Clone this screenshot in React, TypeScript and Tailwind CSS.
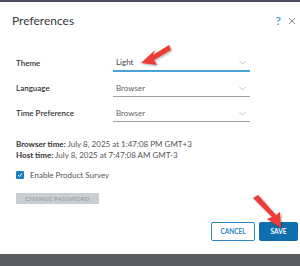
import React from "react";

function Chevron() {
  return (
    <svg width="7" height="5" viewBox="0 0 7 5" className="shrink-0">
      <path d="M0.5 1 L3.5 4 L6.5 1" fill="none" stroke="#b0b4b8" strokeWidth="0.8" />
    </svg>
  );
}

function SelectRow({ label, value, active }: { label: string; value: string; active?: boolean }) {
  return (
    <div className="flex items-end h-[25px]">
      <div className="w-[97px] text-[8px] font-semibold text-[#333] pb-[3px]">{label}</div>
      <div
        className={
          "w-[137px] flex items-center justify-between pl-[3px] pr-[4px] pb-[2px] " +
          (active ? "border-b-[2px] border-[#49a3d9]" : "border-b border-[#9ca3a8]")
        }
      >
        <span className={"text-[8px] " + (active ? "text-[#444]" : "text-[#666]")}>{value}</span>
        <Chevron />
      </div>
    </div>
  );
}

export default function App() {
  return (
    <div
      className="w-[300px] h-[266px] bg-white flex flex-col relative overflow-hidden"
      style={{ fontFamily: "Lato, 'Open Sans', sans-serif" }}
    >
      <div className="h-[2px] bg-[#4b4f60]" />
      <div className="flex-1 flex flex-col px-[16px]">
        <div className="flex items-center justify-between h-[37px] -ml-[4px] -mr-[12px]">
          <div className="text-[12px] text-[#3a3a3a]">Preferences</div>
          <div className="flex items-center gap-[7px]">
            <span className="text-[12px] text-[#3f9ad6] font-semibold">?</span>
            <svg width="8" height="8" viewBox="0 0 8 8">
              <path d="M1 1 L7 7 M7 1 L1 7" stroke="#888" strokeWidth="1" />
            </svg>
          </div>
        </div>
        <div className="mt-[8px] flex flex-col">
          <SelectRow label="Theme" value="Light" active />
          <SelectRow label="Language" value="Browser" />
          <SelectRow label="Time Preference" value="Browser" />
        </div>
        <div className="mt-[17px] text-[8px] text-[#555] leading-[11px]">
          <div>
            <span className="font-bold text-[#333]">Browser time:</span> July 8, 2025 at 1:47:08 PM GMT+3
          </div>
          <div>
            <span className="font-bold text-[#333]">Host time:</span> July 8, 2025 at 7:47:08 AM GMT-3
          </div>
        </div>
        <div className="mt-[8px] flex items-center gap-[6px]">
          <div className="w-[8px] h-[8px] bg-[#1b7fc4] rounded-[1px] flex items-center justify-center">
            <svg width="6" height="6" viewBox="0 0 6 6">
              <path d="M1 3 L2.5 4.5 L5 1.5" fill="none" stroke="white" strokeWidth="1" />
            </svg>
          </div>
          <span className="text-[8px] text-[#555]">Enable Product Survey</span>
        </div>
        <div className="mt-[12px] w-[83px] h-[11px] bg-[#c9ced2] rounded-[1px] flex items-center justify-center">
          <span className="text-[6px] text-[#9aa1a6] font-semibold tracking-[0.3px]">CHANGE PASSWORD</span>
        </div>
        <div className="mt-auto mb-[13px] flex justify-end gap-[4px] -mr-[14px]">
          <div className="w-[44px] h-[19px] border border-[#2d87c4] rounded-[2px] flex items-center justify-center">
            <span className="text-[6.5px] font-bold text-[#2d87c4]">CANCEL</span>
          </div>
          <div className="w-[39px] h-[19px] bg-[#0f6fad] rounded-[2px] flex items-center justify-center">
            <span className="text-[6.5px] font-bold text-white">SAVE</span>
          </div>
        </div>
      </div>
      <div className="h-[12px] bg-[#5b5c61]" />
      <svg className="absolute left-0 top-0 pointer-events-none" width="300" height="266" viewBox="0 0 300 266">
        <defs>
          <filter id="sh" x="-20%" y="-20%" width="140%" height="140%">
            <feDropShadow dx="1" dy="1" stdDeviation="1" floodColor="#000" floodOpacity="0.35" />
          </filter>
        </defs>
        <g filter="url(#sh)" fill="#ef3b36">
          <path d="M169 45 L153 55 L155 50 L141 63 L157 65 L154 60 L171 50 Z" />
          <path d="M253 198 L272 217 L267 219 L281 228 L280 212 L276 215 L258 195 Z" />
        </g>
      </svg>
    </div>
  );
}
